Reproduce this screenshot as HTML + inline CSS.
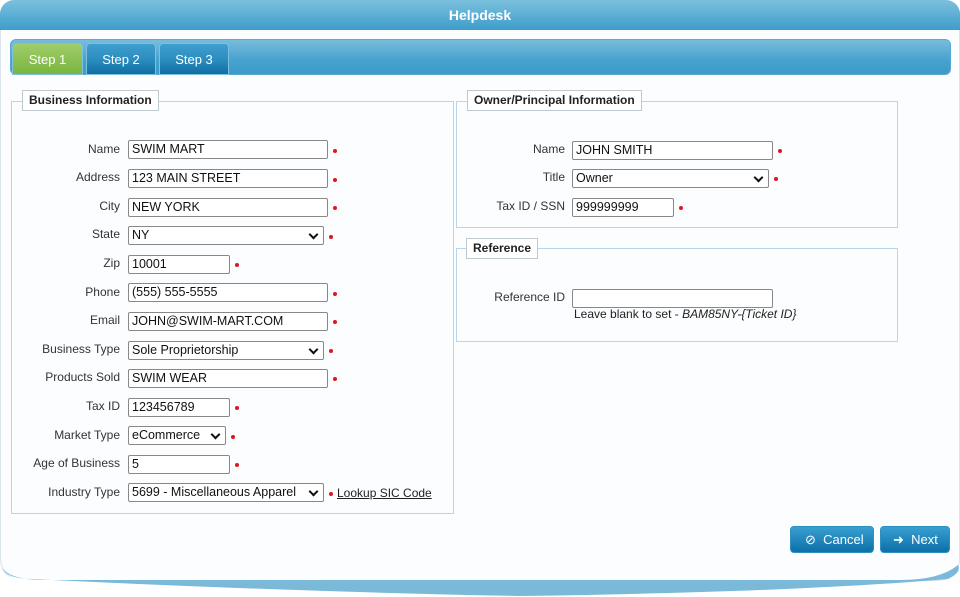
<!DOCTYPE html>
<html><head><style>
*{box-sizing:border-box;margin:0;padding:0}
body{width:960px;height:597px;background:#fff;font-family:"Liberation Sans",Tahoma,sans-serif;position:relative;overflow:hidden;color:#222}
.a{position:absolute}
.hdr{left:0;top:0;width:960px;height:30px;border-radius:14px 14px 0 0;background:linear-gradient(#7cc0de,#3d9dcb);color:#fff;font-weight:bold;font-size:14px;text-align:center;line-height:30px}
.body{left:0;top:29px;width:960px;height:552px;background:#fcfdfe;border-left:1px solid #d8e3ea;border-right:1px solid #d8e3ea;border-bottom:1px solid #d8e3ea;border-radius:0 0 22px 22px}
.swoosh{left:0;top:560px;width:960px;height:37px}
.tabbar{left:10px;top:39px;width:941px;height:36px;border-radius:6px;background:linear-gradient(#78bcdc,#46a2ce 60%,#3c9bc9);border:1px solid #5aa9d2}
.tab{top:43px;height:32px;border-radius:4px 4px 0 0;color:#fff;font-size:13px;text-align:center;line-height:32px;border:1px solid #7fc0e0}
.t1{left:12px;width:71px;background:linear-gradient(#9fcd6b,#7ab53f)}
.t2{left:86px;width:70px;background:linear-gradient(#3fa0cf,#2a8bbd 55%,#0f6fa3)}
.t3{left:159px;width:70px;background:linear-gradient(#3fa0cf,#2a8bbd 55%,#0f6fa3)}
.fs{border:1px solid #b8d5ea}
.lg{background:#fff;border:1px solid #bfc9d0;font-weight:bold;font-size:12px;line-height:19px;padding:0 6px;color:#222}
.lb{font-size:12px;color:#333;text-align:right;width:120px}
.in{height:19px;border:1px solid #888;border-radius:2px;background:#fff;font-size:12.5px;line-height:17px;padding-left:3px;color:#111;white-space:nowrap;overflow:hidden}
.sel::after{content:"";position:absolute;right:6px;top:4px;width:5px;height:5px;border-right:2px solid #111;border-bottom:2px solid #111;transform:rotate(45deg)}
.dot{width:4px;height:4px;border-radius:50%;background:#e0161e}
.btn{top:526px;height:27px;border-radius:4px;background:linear-gradient(#3a9fd0,#1f85bb 55%,#0d70a6);border:1px solid #2e8fc2;color:#fff;font-size:13px;line-height:25px}
</style></head><body>
<div class="a body"></div>
<svg class="a swoosh" width="960" height="37" viewBox="0 0 960 37"><path d="M0 8 Q0 17 20 18 Q300 32 520 35 Q800 32 950 20 Q960 14 960 2 L960 37 L0 37Z" fill="#fff"/><path d="M2 8 Q6 18 30 19 Q300 32 520 36 Q800 32 948 19 Q962 12 958 5 Q940 20 900 20 L40 20 Q10 19 2 8Z" fill="#7bb9d9"/></svg>
<div class="a hdr">Helpdesk</div>
<div class="a tabbar"></div>
<div class="a tab t1">Step 1</div>
<div class="a tab t2">Step 2</div>
<div class="a tab t3">Step 3</div>

<div class="a fs" style="left:11px;top:101px;width:443px;height:413px"></div>
<div class="a lg" style="left:22px;top:90px">Business Information</div>
<div class="a fs" style="left:456px;top:101px;width:442px;height:127px"></div>
<div class="a lg" style="left:467px;top:90px">Owner/Principal Information</div>
<div class="a fs" style="left:456px;top:248px;width:442px;height:94px"></div>
<div class="a lg" style="left:466px;top:238px">Reference</div>

<div id="rows"></div>
<script></script>

<!-- business rows -->
<div class="a lb" style="left:0;top:142px">Name</div><div class="a in" style="left:128px;top:140px;width:200px">SWIM MART</div><div class="a dot" style="left:333px;top:149px"></div>
<div class="a lb" style="left:0;top:170px">Address</div><div class="a in" style="left:128px;top:169px;width:200px">123 MAIN STREET</div><div class="a dot" style="left:333px;top:178px"></div>
<div class="a lb" style="left:0;top:199px">City</div><div class="a in" style="left:128px;top:198px;width:200px">NEW YORK</div><div class="a dot" style="left:333px;top:206px"></div>
<div class="a lb" style="left:0;top:227px">State</div><div class="a in sel" style="left:128px;top:226px;width:196px">NY</div><div class="a dot" style="left:329px;top:235px"></div>
<div class="a lb" style="left:0;top:256px">Zip</div><div class="a in" style="left:128px;top:255px;width:102px">10001</div><div class="a dot" style="left:235px;top:263px"></div>
<div class="a lb" style="left:0;top:285px">Phone</div><div class="a in" style="left:128px;top:283px;width:200px">(555) 555-5555</div><div class="a dot" style="left:333px;top:292px"></div>
<div class="a lb" style="left:0;top:313px">Email</div><div class="a in" style="left:128px;top:312px;width:200px">JOHN@SWIM-MART.COM</div><div class="a dot" style="left:333px;top:320px"></div>
<div class="a lb" style="left:0;top:342px">Business Type</div><div class="a in sel" style="left:128px;top:341px;width:196px">Sole Proprietorship</div><div class="a dot" style="left:329px;top:349px"></div>
<div class="a lb" style="left:0;top:370px">Products Sold</div><div class="a in" style="left:128px;top:369px;width:200px">SWIM WEAR</div><div class="a dot" style="left:333px;top:377px"></div>
<div class="a lb" style="left:0;top:399px">Tax ID</div><div class="a in" style="left:128px;top:398px;width:102px">123456789</div><div class="a dot" style="left:235px;top:406px"></div>
<div class="a lb" style="left:0;top:428px">Market Type</div><div class="a in sel" style="left:128px;top:426px;width:98px">eCommerce</div><div class="a dot" style="left:231px;top:435px"></div>
<div class="a lb" style="left:0;top:456px">Age of Business</div><div class="a in" style="left:128px;top:455px;width:102px">5</div><div class="a dot" style="left:235px;top:463px"></div>
<div class="a lb" style="left:0;top:485px">Industry Type</div><div class="a in sel" style="left:128px;top:483px;width:196px;padding-right:16px">5699 - Miscellaneous Apparel</div><div class="a dot" style="left:329px;top:492px"></div>
<div class="a" style="left:337px;top:486px;font-size:12px;text-decoration:underline;color:#222">Lookup SIC Code</div>

<!-- owner -->
<div class="a lb" style="left:445px;top:142px">Name</div><div class="a in" style="left:572px;top:141px;width:201px">JOHN SMITH</div><div class="a dot" style="left:778px;top:149px"></div>
<div class="a lb" style="left:445px;top:170px">Title</div><div class="a in sel" style="left:572px;top:169px;width:197px">Owner</div><div class="a dot" style="left:774px;top:177px"></div>
<div class="a lb" style="left:445px;top:199px">Tax ID / SSN</div><div class="a in" style="left:572px;top:198px;width:102px">999999999</div><div class="a dot" style="left:679px;top:206px"></div>

<div class="a lb" style="left:445px;top:290px">Reference ID</div><div class="a in" style="left:572px;top:289px;width:201px"></div>
<div class="a" style="left:574px;top:307px;font-size:12px;color:#222">Leave blank to set - <i>BAM85NY-{Ticket ID}</i></div>

<div class="a btn" style="left:790px;width:84px;padding-left:14px">⊘&nbsp; Cancel</div>
<div class="a btn" style="left:880px;width:70px;padding-left:12px">➜&nbsp; Next</div>
</body></html>
